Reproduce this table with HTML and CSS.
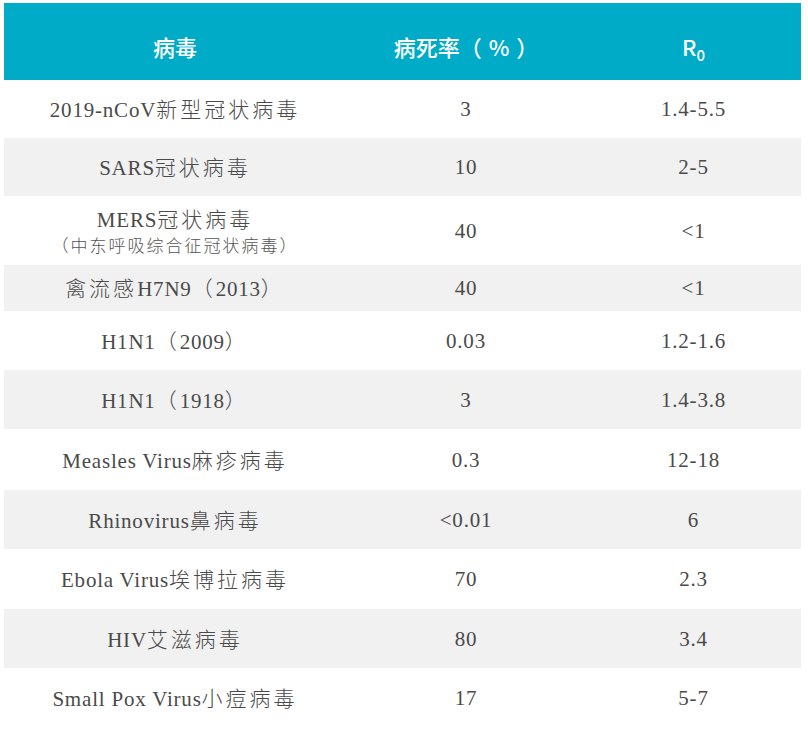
FILE: index.html
```html
<!DOCTYPE html>
<html lang="en">
<head>
<meta charset="utf-8">
<title>病毒对比</title>
<link rel="stylesheet" href="styles.css">
</head>
<body>
<table class="virus-table">
  <colgroup>
    <col class="c-name">
    <col class="c-rate">
    <col class="c-r0">
  </colgroup>
  <thead>
    <tr class="head-row">
      <th class="hcell">病毒</th>
      <th class="hcell">病死率<span class="paren">（</span><span class="pct">%</span><span class="paren">）</span></th>
      <th class="hcell">R<sub class="subz">0</sub></th>
    </tr>
  </thead>
  <tbody>
    <tr class="r58"><td class="cell">2019-nCoV<span class="zh">新型冠状病毒</span></td><td class="cell">3</td><td class="cell">1.4-5.5</td></tr>
    <tr class="r58 alt"><td class="cell">SARS<span class="zh">冠状病毒</span></td><td class="cell">10</td><td class="cell">2-5</td></tr>
    <tr class="r69"><td class="cell"><span class="line">MERS<span class="zh">冠状病毒</span></span><span class="sub">（中东呼吸综合征冠状病毒）</span></td><td class="cell">40</td><td class="cell">&lt;1</td></tr>
    <tr class="r46 alt"><td class="cell"><span class="zh">禽流感</span>H7N9<span class="zh">（</span>2013<span class="zh">）</span></td><td class="cell">40</td><td class="cell">&lt;1</td></tr>
    <tr class="r59"><td class="cell">H1N1<span class="zh">（</span>2009<span class="zh">）</span></td><td class="cell">0.03</td><td class="cell">1.2-1.6</td></tr>
    <tr class="r59 alt"><td class="cell">H1N1<span class="zh">（</span>1918<span class="zh">）</span></td><td class="cell">3</td><td class="cell">1.4-3.8</td></tr>
    <tr class="r61"><td class="cell">Measles Virus<span class="zh">麻疹病毒</span></td><td class="cell">0.3</td><td class="cell">12-18</td></tr>
    <tr class="r59 alt"><td class="cell">Rhinovirus<span class="zh">鼻病毒</span></td><td class="cell">&lt;0.01</td><td class="cell">6</td></tr>
    <tr class="r60"><td class="cell">Ebola Virus<span class="zh">埃博拉病毒</span></td><td class="cell">70</td><td class="cell">2.3</td></tr>
    <tr class="r59 alt"><td class="cell">HIV<span class="zh">艾滋病毒</span></td><td class="cell">80</td><td class="cell">3.4</td></tr>
    <tr class="r60"><td class="cell">Small Pox Virus<span class="zh">小痘病毒</span></td><td class="cell">17</td><td class="cell">5-7</td></tr>
  </tbody>
</table>
</body>
</html>
```
FILE: styles.css
```css
html, body {
  margin: 0;
  padding: 0;
  background: #ffffff;
}

body {
  padding: 3px 7px 0 4px;
  font-family: "Liberation Serif", serif;
  font-size: 21px;
  color: #4a4a4a;
}

.virus-table {
  width: 797px;
  border-collapse: collapse;
  border-spacing: 0;
  table-layout: fixed;
}

.c-name { width: 342px; }
.c-rate { width: 240px; }
.c-r0 { width: 215px; }

.head-row {
  height: 77px;
  background: #00abc8;
}

.hcell {
  padding: 8px 0 0 0;
  font-family: "Noto Sans CJK SC", sans-serif;
  font-size: 22px;
  font-weight: 500;
  color: #ffffff;
  text-align: center;
  vertical-align: middle;
  line-height: 1;
}

.paren {
  display: inline-block;
  width: 22px;
}

.pct {
  display: inline-block;
  padding: 0 7px;
}

.subz {
  font-size: 15px;
  vertical-align: -5px;
  line-height: 0;
}

.cell {
  padding: 0;
  font-family: "Liberation Serif", serif;
  font-size: 21px;
  text-align: center;
  vertical-align: middle;
  line-height: 26px;
  letter-spacing: 0.8px;
  color: #4a4a4a;
}

.alt { background: #f1f1f1; }

.r46 { height: 46px; }
.r58 { height: 58px; }
.r59 { height: 59px; }
.r60 { height: 60px; }
.r61 { height: 61px; }
.r69 { height: 69px; }

.zh {
  font-family: "Noto Sans CJK SC", sans-serif;
  font-weight: 300;
  font-size: 21px;
  letter-spacing: 3px;
  color: #4a4a4a;
}

.line {
  display: block;
  line-height: 26px;
}

.sub {
  display: block;
  font-family: "Noto Sans CJK SC", sans-serif;
  font-weight: 300;
  font-size: 17px;
  letter-spacing: 2px;
  line-height: 24px;
  color: #555555;
}
```
